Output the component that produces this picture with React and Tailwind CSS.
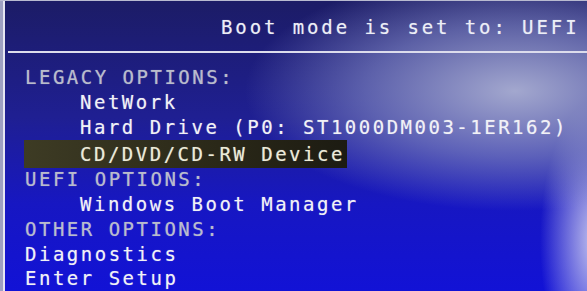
const font = { fontFamily: '"DejaVu Sans Mono", "Liberation Mono", monospace' };

const legacy = ['NetWork', 'Hard Drive (P0: ST1000DM003-1ER162)'];

function Section({ label }) {
    return <div className="h-[25px] leading-[25px] text-[#b9bccb]">{label}</div>;
}

function Item({ label, selected }) {
    if (selected) {
        return (
            <div className="h-[28px] -mb-px leading-[28px] -ml-px w-[323px] pl-[56px] text-[#ecebd8] bg-[linear-gradient(90deg,#3d3b24,#2a2818_60%,#1c1b12)]">
                {label}
            </div>
        );
    }
    return <div className="h-[25px] leading-[25px] pl-[55px] text-[#f1f1f6]">{label}</div>;
}

export default function App() {
    return (
        <div
            className="w-[587px] h-[291px] overflow-hidden flex border-t border-[#b8bad0] bg-[radial-gradient(ellipse_270px_120px_at_515px_90px,rgba(170,175,210,0.95),rgba(135,142,198,0.6)_55%,transparent_100%),radial-gradient(ellipse_55px_140px_at_595px_240px,rgba(205,205,240,0.95),transparent),linear-gradient(180deg,#1c1c66_0%,#1f1f92_40%,#1717c2_70%,#1212d6_100%)]"
            style={font}
        >
            <div className="w-[3px] shrink-0 bg-[#9ea0c2]" />
            <div className="w-[2px] shrink-0 bg-[#e6e6f2]" />
            <div className="flex-1 flex flex-col [text-shadow:0_0_1px_rgba(255,255,255,0.45)]">
                <div className="h-[51px] flex items-center pt-[2px] pl-[216px] text-[19px] tracking-[2.9px] text-[#eceef6] whitespace-nowrap">
                    Boot mode is set to: UEFI
                </div>
                <div className="ml-[3px] h-[2px] bg-[#dcdcec]" />
                <div className="pt-[12px] pl-[20px] text-[19px] tracking-[2.5px] whitespace-nowrap">
                    <Section label="LEGACY OPTIONS:" />
                    {legacy.map((l) => (
                        <Item key={l} label={l} />
                    ))}
                    <Item label="CD/DVD/CD-RW Device" selected />
                    <Section label="UEFI OPTIONS:" />
                    <Item label="Windows Boot Manager" />
                    <Section label="OTHER OPTIONS:" />
                    <div className="h-[24px] leading-[24px] text-[#f1f1f6]">Diagnostics</div>
                    <div className="h-[25px] leading-[25px] text-[#f1f1f6]">Enter Setup</div>
                </div>
            </div>
        </div>
    );
}
